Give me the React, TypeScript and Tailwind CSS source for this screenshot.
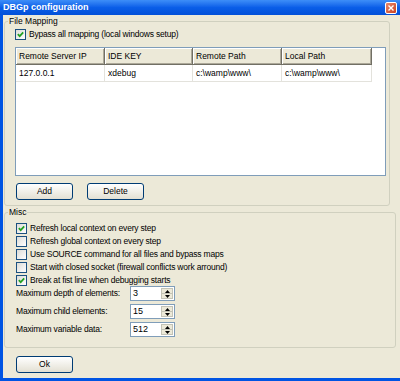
import React from 'react';

const font = "font-['Liberation_Sans',Arial,sans-serif]";

function Check({ checked }: { checked?: boolean }) {
  return (
    <span className="flex h-[11px] w-[11px] shrink-0 items-center justify-center border border-[#1C5180] bg-gradient-to-br from-[#DCDCD7] to-white">
      {checked && (
        <svg width="7" height="7" viewBox="0 0 7 7">
          <path d="M0.8 3.2 L2.7 5.2 L6.2 1.4" stroke="#21A121" strokeWidth="1.7" fill="none" />
        </svg>
      )}
    </span>
  );
}

function CheckRow({ label, checked }: { label: string; checked?: boolean }) {
  return (
    <div className="flex h-[13px] items-center gap-[3px]">
      <Check checked={checked} />
      <span className="whitespace-nowrap tracking-[-0.2px]">{label}</span>
    </div>
  );
}

function XpButton({ label }: { label: string }) {
  return (
    <button className="flex h-[17px] w-[57px] items-center justify-center rounded-[3px] border border-[#003C74] bg-gradient-to-b from-white to-[#E3E0D3] text-black">
      {label}
    </button>
  );
}

function Spinner({ label, value }: { label: string; value: string }) {
  return (
    <div className="flex h-[15px] items-center">
      <span className="w-[114px] whitespace-nowrap tracking-[-0.2px]">{label}</span>
      <div className="flex h-[15px] w-[45px] items-stretch border border-[#7F9DB9] bg-white">
        <span className="flex-1 pl-[2px] text-[9px] leading-[13px]">{value}</span>
        <div className="my-[1px] mr-[1px] flex w-[12px] flex-col border border-[#C3C3B6] bg-[#ECE9D8]">
          <div className="flex flex-1 items-center justify-center border-b border-[#C3C3B6]">
            <svg width="5" height="3" viewBox="0 0 5 3">
              <path d="M0 3 L2.5 0 L5 3 Z" fill="#000" />
            </svg>
          </div>
          <div className="flex flex-1 items-center justify-center">
            <svg width="5" height="3" viewBox="0 0 5 3">
              <path d="M0 0 L2.5 3 L5 0 Z" fill="#000" />
            </svg>
          </div>
        </div>
      </div>
    </div>
  );
}

const cols = [
  { name: 'Remote Server IP', value: '127.0.0.1', w: 'w-[89px]' },
  { name: 'IDE KEY', value: 'xdebug', w: 'w-[88px]' },
  { name: 'Remote Path', value: 'c:\\wamp\\www\\', w: 'w-[89px]' },
  { name: 'Local Path', value: 'c:\\wamp\\www\\', w: 'w-[90px]' },
];

export default function App() {
  return (
    <div className={`flex h-[381px] w-[400px] flex-col overflow-hidden bg-[#0054E3] text-[8.5px] leading-[13px] text-black ${font}`}>
      <div className="flex h-[15px] shrink-0 items-center justify-between bg-gradient-to-b from-[#3D8EF8] via-[#0A5EE8] to-[#0350D8] pl-[3px] pr-[3px]">
        <span className="whitespace-nowrap text-[9px] font-bold text-white">DBGp configuration</span>
        <span className="flex h-[12px] w-[12px] items-center justify-center rounded-[2px] border border-white bg-gradient-to-br from-[#E8876B] to-[#C8401E]">
          <svg width="6" height="6" viewBox="0 0 6 6">
            <path d="M0.5 0.5 L5.5 5.5 M5.5 0.5 L0.5 5.5" stroke="#fff" strokeWidth="1.4" />
          </svg>
        </span>
      </div>

      <div className="mb-[3px] ml-[3px] flex flex-1 flex-col bg-[#ECE9D8]">
        <fieldset className="ml-[1px] w-[386px] rounded-[3px] border border-[#D0D0BF] pb-[5px]">
          <legend className="ml-[3px] px-[1px] leading-[13px]">File Mapping</legend>
          <div className="flex flex-col pl-[10px]">
            <CheckRow label="Bypass all mapping (local windows setup)" checked />
            <div className="mt-[6px] h-[129px] w-[371px] border border-[#7F9DB9] bg-white">
              <div className="flex">
                {cols.map((c) => (
                  <div
                    key={c.name}
                    className={`${c.w} flex h-[17px] items-center border-r border-b border-[#716F64] bg-[#ECE9D8] pl-[3px] shadow-[inset_1px_1px_0_#fff,inset_-1px_-1px_0_#ACA899]`}
                  >
                    {c.name}
                  </div>
                ))}
              </div>
              <div className="flex">
                {cols.map((c) => (
                  <div
                    key={c.name}
                    className={`${c.w} flex h-[17px] items-center border-r border-b border-[#E3E2DC] pl-[3px]`}
                  >
                    {c.value}
                  </div>
                ))}
              </div>
            </div>
            <div className="mt-[7px] flex gap-[14px] pl-[1px]">
              <XpButton label="Add" />
              <XpButton label="Delete" />
            </div>
          </div>
        </fieldset>

        <fieldset className="ml-[1px] w-[392px] rounded-[3px] border border-[#D0D0BF] pb-[10px]">
          <legend className="ml-[3px] px-[1px] leading-[13px]">Misc</legend>
          <div className="mt-[3px] flex flex-col pl-[11px]">
            <CheckRow label="Refresh local context on every step" checked />
            <CheckRow label="Refresh global context on every step" />
            <CheckRow label="Use SOURCE command for all files and bypass maps" />
            <CheckRow label="Start with closed socket (firewall conflicts work arround)" />
            <CheckRow label="Break at fist line when debugging starts" checked />
            <div className="mt-[-1px] flex flex-col gap-[3px]">
              <Spinner label="Maximum depth of elements:" value="3" />
              <Spinner label="Maximum child elements:" value="15" />
              <Spinner label="Maximum variable data:" value="512" />
            </div>
          </div>
        </fieldset>

        <div className="ml-[13px] mt-[8px]">
          <XpButton label="Ok" />
        </div>
      </div>
    </div>
  );
}
